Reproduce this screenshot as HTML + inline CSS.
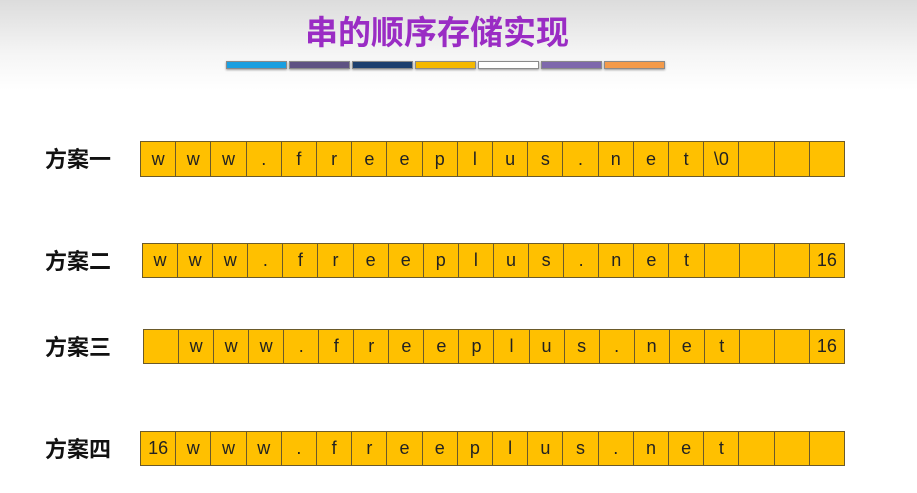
<!DOCTYPE html>
<html><head><meta charset="utf-8"><style>
body{margin:0;width:917px;height:493px;overflow:hidden;background:#fff;font-family:"Liberation Sans","Noto Sans CJK SC",sans-serif;position:relative}
.top{position:absolute;left:0;top:0;width:917px;height:90px;background:linear-gradient(#dcdcdc,#f5f5f5 60%,#fff)}
.title{position:absolute;left:305px;top:8px;font-size:33px;font-weight:bold;color:#9a2cc4;font-family:"Noto Sans CJK SC",sans-serif;line-height:44px}
.bars{position:absolute;left:226px;top:61px;display:flex;gap:2px}
.bars div{width:61px;border:1px solid #8a8a8a;box-shadow:0 1px 2px #999;box-sizing:border-box;height:8px}
.lab{position:absolute;left:45px;font-size:22px;font-weight:bold;color:#111;font-family:"Noto Sans CJK SC",sans-serif}
.row{position:absolute;display:flex;border:1px solid #6b5a2a;background:#ffc000}
.row div{flex:1;border-right:1px solid #6b5a2a;display:flex;align-items:center;justify-content:center;font-size:18px;color:#222}
.row div:last-child{border-right:none}
</style></head><body>
<div class="top"></div>
<div class="title">串的顺序存储实现</div>
<div class="bars"><div style="background:#1a9fe0"></div><div style="background:#5e5283"></div><div style="background:#1d3f6e"></div><div style="background:#f4b800"></div><div style="background:#fff"></div><div style="background:#7e68ac"></div><div style="background:#f39a4a"></div></div>
<div class="lab" style="top:142px">方案一</div>
<div class="lab" style="top:244px">方案二</div>
<div class="lab" style="top:330px">方案三</div>
<div class="lab" style="top:432px">方案四</div>
<div class="row" style="left:140px;top:141px;width:703px;height:34px"><div>w</div><div>w</div><div>w</div><div>.</div><div>f</div><div>r</div><div>e</div><div>e</div><div>p</div><div>l</div><div>u</div><div>s</div><div>.</div><div>n</div><div>e</div><div>t</div><div>\0</div><div></div><div></div><div></div></div>
<div class="row" style="left:142px;top:243px;width:701px;height:33px"><div>w</div><div>w</div><div>w</div><div>.</div><div>f</div><div>r</div><div>e</div><div>e</div><div>p</div><div>l</div><div>u</div><div>s</div><div>.</div><div>n</div><div>e</div><div>t</div><div></div><div></div><div></div><div>16</div></div>
<div class="row" style="left:143px;top:329px;width:700px;height:33px"><div></div><div>w</div><div>w</div><div>w</div><div>.</div><div>f</div><div>r</div><div>e</div><div>e</div><div>p</div><div>l</div><div>u</div><div>s</div><div>.</div><div>n</div><div>e</div><div>t</div><div></div><div></div><div>16</div></div>
<div class="row" style="left:140px;top:431px;width:703px;height:33px"><div>16</div><div>w</div><div>w</div><div>w</div><div>.</div><div>f</div><div>r</div><div>e</div><div>e</div><div>p</div><div>l</div><div>u</div><div>s</div><div>.</div><div>n</div><div>e</div><div>t</div><div></div><div></div><div></div></div>
</body></html>
